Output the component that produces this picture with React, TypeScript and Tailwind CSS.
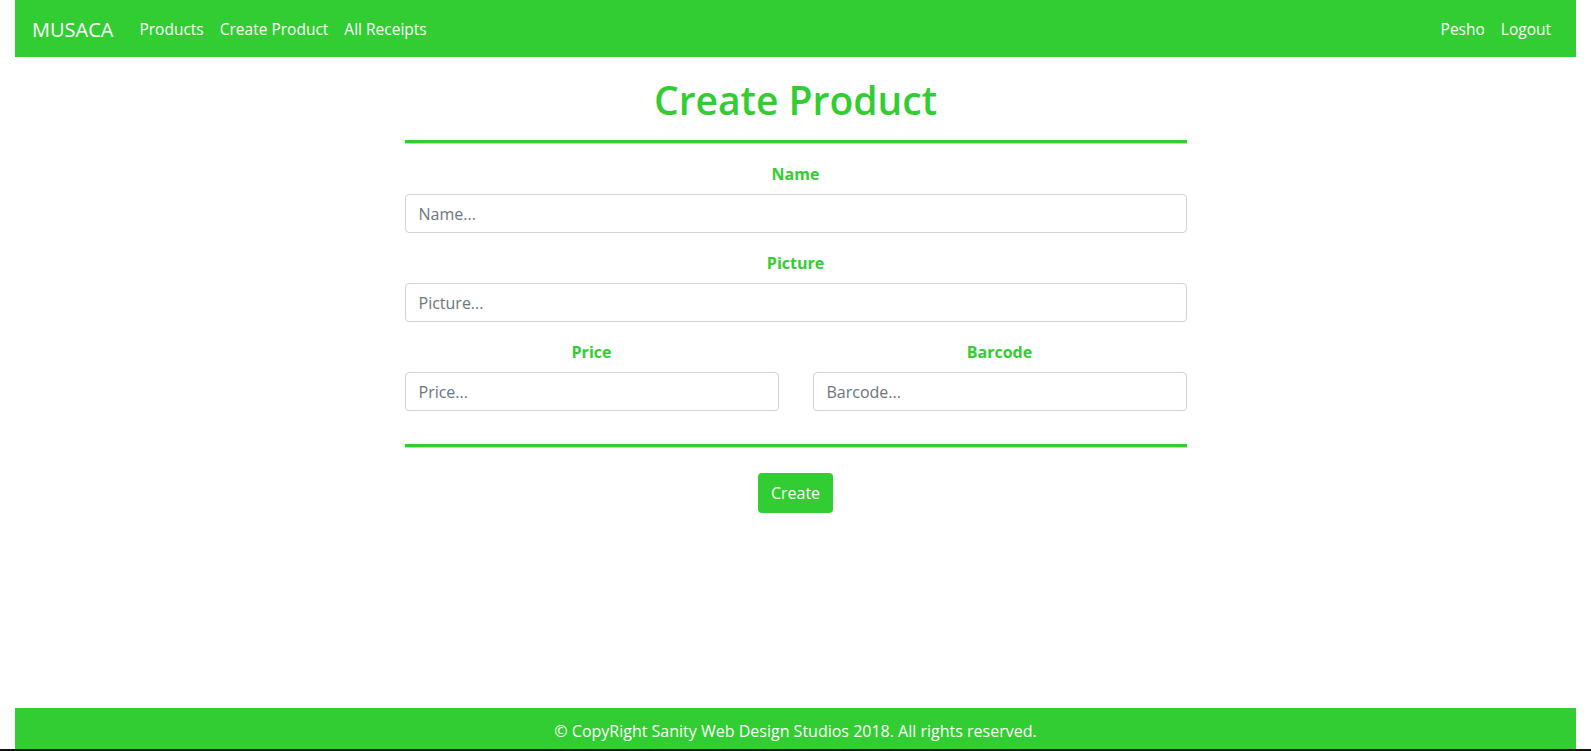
import React from 'react';

const navLinks = ['Products', 'Create Product', 'All Receipts'];

const Field: React.FC<{ label: string; placeholder: string }> = ({ label, placeholder }) => (
  <div className="flex flex-col">
    <label className="text-center text-[16px] leading-[24px] font-bold text-[#32cd32] mb-[8px]">{label}</label>
    <input
      type="text"
      placeholder={placeholder}
      className="h-[39px] w-full rounded-[4px] border border-[#ced4da] bg-white px-[13px] text-[16px] text-[#495057] placeholder:text-[#6c757d] outline-none"
    />
  </div>
);

const Divider: React.FC = () => (
  <div className="flex flex-col">
    <div className="h-[3px] bg-[#32cd32]" />
    <div className="h-px bg-[#a8e8a8]" />
  </div>
);

export default function App() {
  return (
    <div className="min-h-screen flex flex-col bg-white font-['Open_Sans',sans-serif]">
      {/* Navbar */}
      <nav className="mx-[15px] h-[57px] bg-[#32cd32] flex items-center justify-between pl-[17px] pr-[17px] pt-[2px]">
        <div className="flex items-center">
          <a className="text-[20px] text-white mr-[18px]">MUSACA</a>
          {navLinks.map((l) => (
            <a key={l} className="px-[8px] text-[15.5px] text-white">
              {l}
            </a>
          ))}
        </div>
        <div className="flex items-center">
          <a className="px-[8px] text-[15.5px] text-white">Pesho</a>
          <a className="px-[8px] text-[15.5px] text-white">Logout</a>
        </div>
      </nav>

      {/* Main */}
      <main className="flex-1">
        <div className="mx-auto w-[782px] pt-[19px]">
          <h1 className="text-center text-[39px] leading-[48px] font-semibold text-[#32cd32]">Create Product</h1>
          <div className="mt-[16px]">
            <Divider />
          </div>
          <form className="mt-[18px] flex flex-col gap-[18px]">
            <Field label="Name" placeholder="Name..." />
            <Field label="Picture" placeholder="Picture..." />
            <div className="grid grid-cols-2 gap-[34px]">
              <Field label="Price" placeholder="Price..." />
              <Field label="Barcode" placeholder="Barcode..." />
            </div>
          </form>
          <div className="mt-[33px]">
            <Divider />
          </div>
          <div className="mt-[25px] flex justify-center">
            <button
              type="button"
              className="h-[40px] w-[75px] rounded-[4px] bg-[#32cd32] text-[16px] text-white"
            >
              Create
            </button>
          </div>
        </div>
      </main>

      {/* Footer */}
      <footer className="mx-[15px] h-[41px] bg-[#32cd32] flex items-center justify-center pt-[4px]">
        <p className="text-[16px] text-white">© CopyRight Sanity Web Design Studios 2018. All rights reserved.</p>
      </footer>
      <div className="h-[2px] bg-[#101410]" />
    </div>
  );
}
